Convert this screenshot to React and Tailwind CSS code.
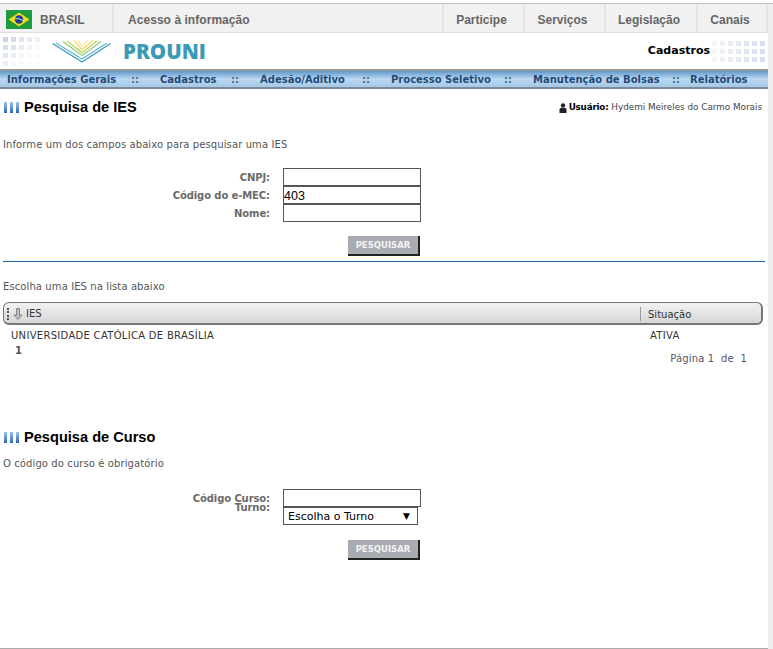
const verdana = { fontFamily: '"DejaVu Sans", sans-serif' }

function Flag() {
  return (
    <svg width="26" height="19" viewBox="0 0 26 19" className="block">
      <rect width="26" height="19" fill="#1f9a3c" />
      <path d="M13 2.5 L23.5 9.5 L13 16.5 L2.5 9.5 Z" fill="#f4dc1e" />
      <circle cx="13" cy="9.5" r="4.2" fill="#1d3f8f" />
      <path d="M9 8.6 Q13 8 17 10.6" stroke="#fff" strokeWidth="0.8" fill="none" />
    </svg>
  )
}

function BookLogo() {
  return (
    <svg width="60" height="23" viewBox="0 0 60 23" fill="none" strokeWidth="1.4" className="block">
      <path d="M0.5 3.5 L30 22 L58.5 3.5" stroke="#3f9dbd" />
      <path d="M4 3 L30 19 L55 3" stroke="#6bb8cc" />
      <path d="M11 1.5 L30 15.5 L49 1.5" stroke="#93cc86" />
      <path d="M15 1 L30 12.5 L45 1" stroke="#b9d65c" />
      <path d="M22 0.5 L30 9.5 L41 0.5" stroke="#f5d873" />
      <path d="M26 0.5 L30 6 L36 0.5" stroke="#fae9b0" />
    </svg>
  )
}

// grade de pontos ao lado do logo e do nome da pagina
function Dots({ rows, cols, fade, className }) {
  const cells = []
  for (let r = 0; r < rows; r++) {
    for (let c = 0; c < cols; c++) {
      cells.push(<span key={r + '-' + c} className="h-[5px] w-[5px] bg-[#c9d3e6]" style={{ opacity: fade(r, c) }} />)
    }
  }
  return (
    <div className={'grid shrink-0 gap-x-[3px] gap-y-[3px] ' + className} style={{ gridTemplateColumns: `repeat(${cols}, 5px)` }}>
      {cells}
    </div>
  )
}

function Bars() {
  return (
    <div className="flex gap-[3px]">
      <span className="h-[11px] w-[3px] bg-gradient-to-b from-[#9fc5ee] to-[#2a62b0]" />
      <span className="h-[11px] w-[3px] bg-gradient-to-b from-[#9fc5ee] to-[#2a62b0]" />
      <span className="h-[11px] w-[3px] bg-gradient-to-b from-[#9fc5ee] to-[#2a62b0]" />
    </div>
  )
}

function SectionTitle({ children }) {
  return (
    <div className="flex items-center gap-[5px] pl-[4px]">
      <Bars />
      <h2 className="font-['Liberation_Sans',sans-serif] text-[14.6px] leading-[18px] font-bold text-black">{children}</h2>
    </div>
  )
}

function Field({ label, value }) {
  return (
    <div className="flex h-[18px] items-center">
      <label className="w-[270px] pt-[1px] text-right text-[10px] font-bold tracking-[-0.1px] text-[#6a6a6a]">{label}</label>
      <input
        readOnly
        value={value || ''}
        className="ml-[13px] h-[18px] w-[138px] border border-[#555] bg-white px-0 pt-[2px] font-['Liberation_Sans',sans-serif] text-[12.5px] text-black outline-none"
      />
    </div>
  )
}

function SearchButton() {
  return (
    <div className="flex justify-end pr-[348px]">
      <button
        type="button"
        className="h-[20px] w-[72px] border-r-2 border-b-2 border-[#222] bg-[#a9adb3] text-[8.5px] font-bold text-[#f3f3f3]"
      >
        PESQUISAR
      </button>
    </div>
  )
}

const topLinks = [
  ['Participe', 'w-[81px]'],
  ['Serviços', 'w-[81px]'],
  ['Legislação', 'w-[92px]'],
  ['Canais', 'w-[70px]'],
]

const menu = [
  ['Informações Gerais', 'w-[153px] pr-[21px]'],
  ['Cadastros', 'w-[100px] pr-[21px]'],
  ['Adesão/Aditivo', 'w-[131px] pr-[21px]'],
  ['Processo Seletivo', 'w-[142px] pr-[21px]'],
  ['Manutenção de Bolsas', 'w-[157px] pr-[10px]'],
]

export default function App() {
  return (
    <div className="flex h-[649px] w-full flex-col overflow-hidden bg-white text-[10px] text-[#555]" style={verdana}>
      <div className="mt-[3px] h-[1px] shrink-0 bg-[#bdbdbd]" />
      <div className="flex min-h-0 flex-1">
        <div className="flex w-[768px] flex-col border-b border-[#aaa]">
          {/* barra do governo */}
          <div className="flex h-[29px] shrink-0 border-b border-[#e0e0e0] bg-[#f1f1f1] pt-[1px] font-['Liberation_Sans',sans-serif] text-[12px] font-bold text-[#666]">
            <div className="flex w-[114px] items-center gap-[8px] border-r-2 border-[#e3e3e3] pt-[2px] pl-[6px]">
              <Flag />
              <span>BRASIL</span>
            </div>
            <div className="flex flex-1 items-center pt-[2px] pl-[14px] tracking-[0.05px]">Acesso à informação</div>
            {topLinks.map(([name, w]) => (
              <div key={name} className={'flex items-center justify-center border-l-2 border-[#e3e3e3] pt-[2px] pr-[4px] ' + w}>
                {name}
              </div>
            ))}
            <div className="w-[2px] border-l-2 border-[#e3e3e3]" />
          </div>

          {/* logo */}
          <div className="flex h-[36px] shrink-0 items-center bg-white">
            <Dots rows={4} cols={5} fade={(r, c) => Math.max(0.12, 0.95 - r * 0.2 - c * 0.16)} className="ml-[3px]" />
            <div className="ml-[12px]"><BookLogo /></div>
            <div className="ml-[11px] font-['Open_Sans',sans-serif] text-[20.5px] leading-[24px] font-extrabold text-[#3d9ab5]">PROUNI</div>
            <div className="ml-auto text-[11px] font-bold text-black">Cadastros</div>
            <div className="w-[58px] shrink-0 overflow-hidden pl-[2px]">
              <Dots rows={3} cols={8} fade={(r, c) => Math.min(0.8, 0.25 + c * 0.08)} />
            </div>
          </div>

          {/* menu */}
          <div className="flex h-[20px] shrink-0 items-center border-t-[2px] border-b-[2px] border-t-[#9a9a9a] border-b-[#7c8a99] bg-gradient-to-b from-[#5f97c9] via-[#bcd8f0] to-[#a4c8e8] pl-[7px] text-[10px] font-bold whitespace-nowrap text-[#1e4a78]">
            {menu.map(([name, w]) => (
              <div key={name} className={'flex justify-between ' + w}>
                <span>{name}</span>
                <span className="text-[#3f6d9c]">::</span>
              </div>
            ))}
            <span>Relatórios</span>
          </div>

          {/* pesquisa de IES */}
          <div className="mt-[9px] flex items-center justify-between pr-[6px]">
            <SectionTitle>Pesquisa de IES</SectionTitle>
            <div className="flex items-center gap-[2px] pt-[1px] text-[8.8px] text-[#444]">
              <svg width="8" height="10" viewBox="0 0 8 10" fill="#222">
                <circle cx="4" cy="2.5" r="2.2" />
                <path d="M0.5 10 V6.5 Q0.5 5 2 5 H6 Q7.5 5 7.5 6.5 V10 Z" />
              </svg>
              <span><b className="tracking-[-0.2px] text-black">Usuário:</b> Hydemi Meireles do Carmo Morais</span>
            </div>
          </div>
          <p className="mt-[23px] pl-[3px] text-[10px] leading-[12px] tracking-[0.1px]">Informe um dos campos abaixo para pesquisar uma IES</p>

          <div className="mt-[17px] flex flex-col">
            <Field label="CNPJ:" />
            <Field label="Código do e-MEC:" value="403" />
            <Field label="Nome:" />
          </div>
          <div className="mt-[14px]"><SearchButton /></div>

          <hr className="mx-[3px] mt-[5px] border-t border-[#1f62a8]" />

          <p className="mt-[19px] pl-[3px] text-[10px] leading-[12px] tracking-[0.1px]">Escolha uma IES na lista abaixo</p>

          {/* grid */}
          <div className="mt-[9px] ml-[3px] flex h-[23px] w-[760px] shrink-0 items-center rounded-[6px] border-t border-r-[2px] border-b-[2px] border-l border-[#777] bg-gradient-to-b from-[#f2f2f2] to-[#d6d6d6] pt-[1px] text-[10px] text-[#333]">
            <div className="ml-[3px] h-[12px] border-l-2 border-dotted border-[#555]" />
            <svg width="10" height="12" viewBox="0 0 10 12" className="ml-[4px]">
              <path d="M3.5 0.5 H6.5 V7 H9 L5 11.5 L1 7 H3.5 Z" fill="#bbb" stroke="#666" strokeWidth="0.7" />
            </svg>
            <span className="ml-[3px] w-[614px]">IES</span>
            <div className="h-[14px] border-l border-[#999] pl-[7px]">Situação</div>
          </div>
          <div className="mt-[5px] flex text-[10px] leading-[12px] text-[#333]">
            <span className="ml-[11px] w-[639px] tracking-[0.3px]">UNIVERSIDADE CATÓLICA DE BRASÍLIA</span>
            <span className="tracking-[0.3px]">ATIVA</span>
          </div>
          <div className="mt-[3px] flex justify-between pr-[21px] leading-[12px]">
            <b className="ml-[15px] text-[#555]">1</b>
            <span className="mt-[8px] text-[10px] tracking-[0.15px] whitespace-pre text-[#556]">Página 1  de  1</span>
          </div>

          {/* pesquisa de curso */}
          <div className="mt-[63px]"><SectionTitle>Pesquisa de Curso</SectionTitle></div>
          <p className="mt-[12px] pl-[3px] text-[10px] leading-[12px] tracking-[0.1px]">O código do curso é obrigatório</p>

          <div className="mt-[19px] flex">
            <div className="w-[270px] pt-[5px] text-right text-[10px] leading-[9px] font-bold tracking-[-0.1px] text-[#6a6a6a]">
              <div>Código Curso:</div>
              <div>Turno:</div>
            </div>
            <div className="ml-[13px] flex flex-col">
              <input readOnly className="h-[18px] w-[138px] border border-[#555] bg-white outline-none" />
              <div className="flex h-[18px] w-[135px] items-center justify-between border border-[#555] pt-[2px] pr-[7px] pl-[4px] text-[11px] text-black">
                <span>Escolha o Turno</span>
                <span className="text-[9px]">▼</span>
              </div>
            </div>
          </div>
          <div className="mt-[15px]"><SearchButton /></div>
        </div>
        <div className="flex-1 bg-[#efefef]" />
      </div>
    </div>
  )
}
